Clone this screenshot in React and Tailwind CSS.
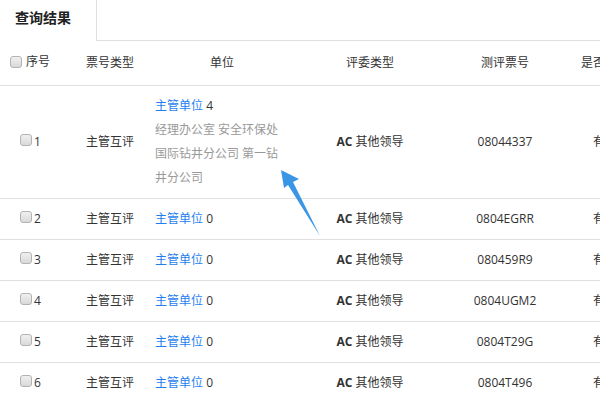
import React from 'react';

const rows = [
  { no: 1, ticket: '08044337', count: 4, units: ['经理办公室 安全环保处', '国际钻井分公司 第一钻', '井分公司'] },
  { no: 2, ticket: '0804EGRR', count: 0 },
  { no: 3, ticket: '080459R9', count: 0 },
  { no: 4, ticket: '0804UGM2', count: 0 },
  { no: 5, ticket: '0804T29G', count: 0 },
  { no: 6, ticket: '0804T496', count: 0 },
];

const cols = 'grid grid-cols-[70px_80px_144px_152px_118px_82px]';

const Box = () => (
  <span className="inline-block w-[12px] h-[12px] rounded-[3px] border border-[#b3b3b3] bg-gradient-to-b from-[#f0f0f0] to-[#d9d9d9] align-middle" />
);

const App = () => {
  return (
    <div
      className="relative w-[600px] h-[400px] overflow-hidden bg-white text-[12px] text-[#333]"
      style={{ fontFamily: '"Open Sans", "Noto Sans CJK SC", sans-serif' }}
    >
      {/* Tabs */}
      <div className="flex h-[41px]">
        <div className="w-[97px] border-r border-[#e0e0e0] pl-[15px] pt-[9px] text-[14px] font-bold text-[#222] leading-[18px]">
          查询结果
        </div>
        <div className="flex-1 border-b border-[#e0e0e0]" />
      </div>

      {/* Header */}
      <div className={`${cols} h-[45px] border-b border-[#e0e0e0] items-center`}>
        <div className="flex items-center gap-[4px] pl-[10px] -mt-[2px]">
          <Box />
          <span>序号</span>
        </div>
        <div className="text-center">票号类型</div>
        <div className="text-center">单位</div>
        <div className="text-center">评委类型</div>
        <div className="text-center">测评票号</div>
        <div className="text-center whitespace-nowrap">是否有效</div>
      </div>

      {/* Body */}
      {rows.map((r) => (
        <div key={r.no} className={`${cols} border-b border-[#e0e0e0] items-center py-[8px] leading-[24px]`}>
          <div className="flex items-center gap-[2px] pl-[20px] -mt-[4px]">
            <Box />
            <span className="leading-[16px] mt-[4px]">{r.no}</span>
          </div>
          <div className="text-center">主管互评</div>
          <div className="pl-[5px] whitespace-nowrap">
            <div>
              <span className="text-[#1f7fef]">主管单位</span> {r.count}
            </div>
            {r.units && r.units.map((u) => (
              <div key={u} className="text-[#999]">{u}</div>
            ))}
          </div>
          <div className="text-center">
            <span className="font-bold">AC</span> 其他领导
          </div>
          <div className="text-center">{r.ticket}</div>
          <div className="text-center">有效</div>
        </div>
      ))}

      {/* Annotation arrow */}
      <svg className="absolute left-0 top-0 pointer-events-none" width="600" height="400">
        <polygon
          points="281,170 299,179 293,182 320,236 288,185 284,188"
          fill="#3a96e4"
        />
      </svg>
    </div>
  );
};

export default App;
